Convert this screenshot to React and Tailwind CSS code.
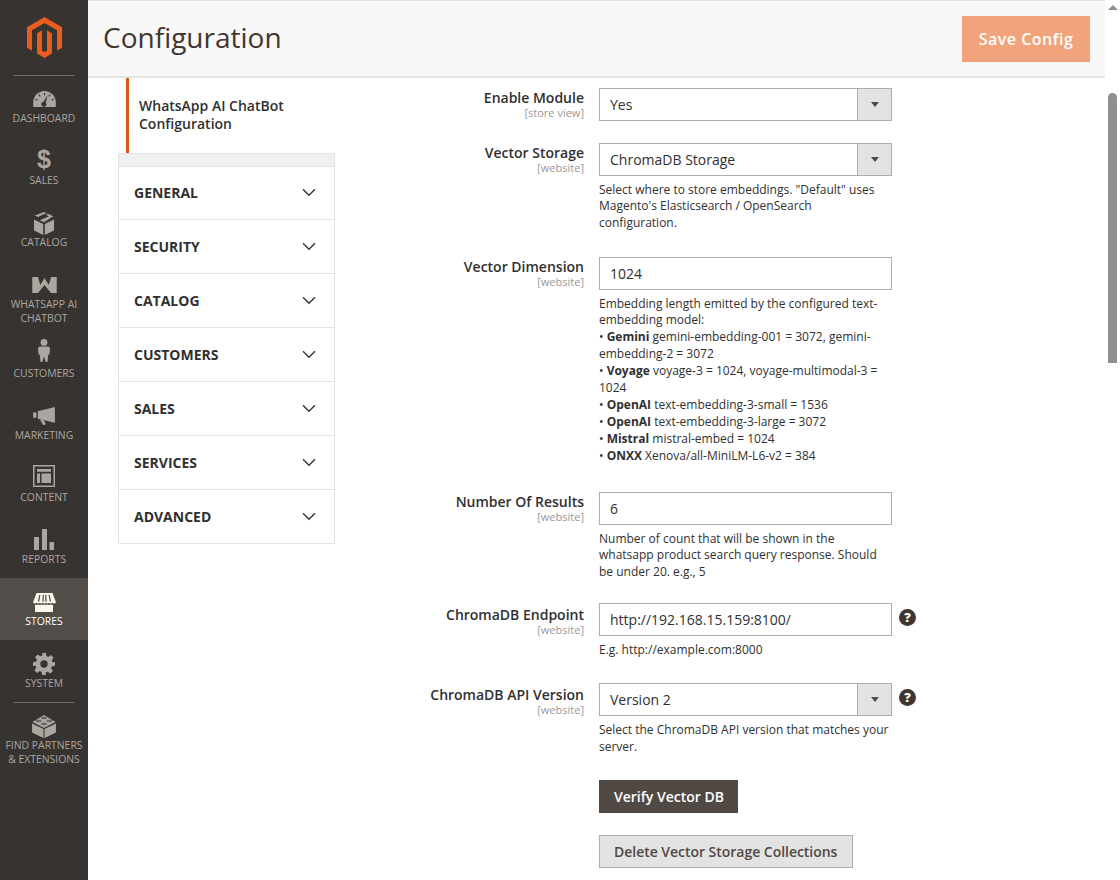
const C = "#aaa6a0";
const Gauge = ({ c = C }) => (
  <svg width="23" height="16" viewBox="0 0 24 17" fill={c}>
    <path d="M12 0C5.400 0 0 5.400 0 12v5h24v-5C24 5.400 18.600 0 12 0z" />
    <path d="M15.200 4.500l-4.200 7a2.600 2.600 0 1 0 2.400 1z" fill="#373330" />
    <g fill="#373330"><rect x="11.400" y="2" width="1.200" height="2.400" /><rect x="6.200" y="3.600" width="1.200" height="2.400" transform="rotate(-32 6.800 4.800)" /><rect x="2.800" y="8" width="1.200" height="2.400" transform="rotate(-62 3.400 9.200)" /><rect x="20" y="8" width="1.200" height="2.400" transform="rotate(62 20.600 9.200)" /><rect x="16.600" y="3.600" width="1.200" height="2.400" transform="rotate(32 17.200 4.800)" /></g>
  </svg>
);
const Dollar = () => (
  <span className="text-[25px] leading-none font-extrabold text-[#aaa6a0] [font-family:'Liberation_Sans',sans-serif]">$</span>
);
const Box = () => (
  <svg width="20" height="23" viewBox="0 0 20 23" fill={C}>
    <path d="M0 7.500L9.200 12v11L1 19a2 2 0 0 1-1-1.800z" />
    <path d="M20 7.500L10.800 12v11l8.200-4a2 2 0 0 0 1-1.800z" />
    <path d="M10 0l2.500 1.100L4 5l-3.300-1.500zM14 1.800l5.300 2.500L10 10.300 5.800 8.300 15 4.300 11.800 2.800z" />
  </svg>
);
const WLogo = () => (
  <svg width="25" height="16" viewBox="0 0 26 17" fill={C}>
    <path d="M0 0h6l2.500 8.500L13 1l4.500 7.500L20 0h6v17h-6L13 8.500 6 17H0z" />
  </svg>
);
const Person = () => (
  <svg width="12" height="23" viewBox="0 0 12 23" fill={C}>
    <circle cx="6" cy="3.400" r="3.400" />
    <path d="M2.500 7.500h7A2.300 2.300 0 0 1 12 9.800l-.5 5.700h-1.300L9.500 23H7.600L6 17.500 4.400 23H2.500l-.7-7.500H.5L0 9.800a2.300 2.300 0 0 1 2.500-2.300z" />
  </svg>
);
const Mega = () => (
  <svg width="22" height="18" viewBox="0 0 23 19" fill={C}>
    <rect x="0" y="5.500" width="3.500" height="6" rx="1.500" />
    <path d="M5 4.500L23 0v16.500L5 12.500z" />
    <path d="M7 13l4.500 1 2 4.500-3 .5z" />
  </svg>
);
const Content = () => (
  <svg width="22" height="22" viewBox="0 0 22 22" fill={C}>
    <path fillRule="evenodd" d="M0 0h22v22H0zM1.500 1.500v19h19v-19z" />
    <rect x="4" y="4" width="14" height="2.800" />
    <rect x="4" y="8.500" width="3" height="9.500" />
    <rect x="8.500" y="8.500" width="9.500" height="9.500" />
  </svg>
);
const Bars = () => (
  <svg width="20" height="21" viewBox="0 0 20 21" fill={C}>
    <rect x="0" y="8" width="5" height="13" />
    <rect x="8" y="0" width="5" height="21" />
    <rect x="15.500" y="13" width="4.500" height="8" />
  </svg>
);
const Store = () => (
  <svg width="23" height="19" viewBox="0 0 23 19" fill="#fbf7ec">
    <path d="M3.500 0h16L23 9.500q-1.800 1.800-3.500.2-1.700 1.600-3.300 0-1.600 1.600-3.300 0-1 1-1.400 1-.4 0-1.400-1-1.700 1.600-3.300 0-1.600 1.600-3.300 0Q1.800 11.300 0 9.500z" />
    <path d="M6.300 1.800L4.900 8.600h1.400l1.100-6.800zM9.800 1.800L9.300 8.600h1.400l.2-6.800zM12.100 1.800l.2 6.800h1.400l-.5-6.800zM15.600 1.800l1.100 6.800h1.400l-1.400-6.800z" fill="#524d49" />
    <path d="M2 11.500q1.500.8 3.200 0 1.600.8 3.200 0 1.600.8 3.100 0 1.600.8 3.100 0 1.600.8 3.200 0 1.200.8 2.200.3V19H2z" />
  </svg>
);
const Gear = () => (
  <svg width="22" height="22" viewBox="0 0 24 24" fill={C}>
    <path fillRule="evenodd" d="M10 0h4l.6 3.400 2.100.9 2.900-2 2.800 2.800-2 2.900.9 2.100L24 10v4l-3.400.6-.9 2.100 2 2.900-2.800 2.800-2.900-2-2.100.9L14 24h-4l-.6-3.400-2.100-.9-2.900 2-2.800-2.800 2-2.900-.9-2.100L0 14v-4l3.400-.6.9-2.100-2-2.900 2.800-2.800 2.900 2 2.100-.9zM12 8a4 4 0 1 0 0 8 4 4 0 0 0 0-8z" />
  </svg>
);
const Lego = () => (
  <svg width="24" height="24" viewBox="0 0 24 24" fill={C}>
    <path d="M0 9.500L11.500 15v9L1 19a2 2 0 0 1-1-1.500z" />
    <path d="M24 9.500L12.500 15v9L23 19a2 2 0 0 0 1-1.500z" />
    <path d="M12 1l11.500 7L12 14 .5 8z" />
    <g fill="#373330" fillOpacity=".55"><ellipse cx="12" cy="4" rx="3" ry="1.300" /><ellipse cx="6.500" cy="7" rx="3" ry="1.300" /><ellipse cx="17.500" cy="7" rx="3" ry="1.300" /><ellipse cx="12" cy="10" rx="3" ry="1.300" /></g>
  </svg>
);

function NavItem({ icon, label, active, tall }) {
  return (
    <div className={`flex flex-col items-center ${tall ? "h-[69px]" : "h-[62px]"} ${active ? "bg-[#524d49]" : ""}`}>
      <div className="h-[36px] pt-[12px] flex items-center justify-center">{icon}</div>
      <div className={`text-[10.4px] leading-[14px] text-center uppercase whitespace-pre-line ${active ? "text-white" : "text-[#aaa6a0]"}`}>{label}</div>
    </div>
  );
}

function Sidebar() {
  return (
    <div className="w-[88px] shrink-0 h-[880px] bg-[#373330]">
      <div className="h-[75px] flex items-center justify-center pb-[1px]">
        <svg width="35" height="41" viewBox="0 0 24 28" fill="#eb5d1f">
          <path d="M12 0L0 7v14l3.400 2V9l8.600-5 8.600 5v14l3.400-2V7z" />
          <path d="M13.700 23l-1.700 1-1.700-1V9L6.900 11v14l5.100 3 5.100-3V11l-3.400-2z" />
        </svg>
      </div>
      <div className="mx-[14px] border-t border-[#736e6a]" />
      <div className="-mt-px">
        <NavItem icon={<Gauge />} label="Dashboard" />
        <NavItem icon={<div className="-mt-[1px]"><Dollar /></div>} label="Sales" />
        <NavItem icon={<Box />} label="Catalog" />
        <NavItem tall icon={<div className="-mt-[1px]"><WLogo /></div>} label={"WhatsApp AI\nChatBot"} />
        <NavItem icon={<div className="-mt-[8px]"><Person /></div>} label="Customers" />
        <NavItem icon={<Mega />} label="Marketing" />
        <NavItem icon={<div className="-mt-[4px]"><Content /></div>} label="Content" />
        <NavItem icon={<div className="-mt-[1px]"><Bars /></div>} label="Reports" />
        <NavItem active icon={<Store />} label="Stores" />
        <NavItem icon={<Gear />} label="System" />
      </div>
      <div className="mx-[14px] border-t border-[#736e6a]" />
      <div className="mt-[1px]">
        <NavItem icon={<div className="-mt-[3px]"><Lego /></div>} label={"Find Partners\n& Extensions"} />
      </div>
    </div>
  );
}

const Chevron = () => (
  <svg width="14" height="9" viewBox="0 0 14 9" fill="none" stroke="#41362f" strokeWidth="1.500">
    <path d="M1 1.200l6 6 6-6" />
  </svg>
);

function Accordion({ label }) {
  return (
    <div className="h-[53.86px] flex items-center justify-between border-b border-[#e3e3e3] pl-[15px] pr-[18px]">
      <span className="text-[14px] font-bold text-[#303030]">{label}</span>
      <Chevron />
    </div>
  );
}

function LeftNav() {
  return (
    <div className="w-[217px] shrink-0 ml-[30px]">
      <div className="ml-[8px] h-[75px] border-l-[3px] border-[#d85a17] pl-[10px] pb-[2px] flex items-center">
        <div className="text-[14px] leading-[18px] font-semibold text-[#303030]">WhatsApp AI ChatBot<br />Configuration</div>
      </div>
      <div className="h-[13.500px] bg-[#f0f0f0] border border-[#e3e3e3]" />
      <div className="border-x border-[#e3e3e3]">
        {["GENERAL", "SECURITY", "CATALOG", "CUSTOMERS", "SALES", "SERVICES", "ADVANCED"].map((l) => (
          <Accordion key={l} label={l} />
        ))}
      </div>
    </div>
  );
}

function Row({ label, scope, children, help, className = "" }) {
  return (
    <div className={`flex ${className}`}>
      <div className={`w-[249px] shrink-0 text-right ${help ? "pt-[2px]" : ""}`}>
        <div className="text-[14px] leading-[20px] font-semibold text-[#303030]">{label}</div>
        <div className="text-[11px] leading-[10px] text-[#999]">[{scope}]</div>
      </div>
      <div className="w-[293px] shrink-0 ml-[15px]">{children}</div>
      {help && (
        <div className="ml-[7px] mt-[6px] w-[17px] h-[17px] rounded-full bg-[#41362f] text-white text-[13px] font-extrabold leading-[17px] text-center">?</div>
      )}
    </div>
  );
}

const Select = ({ value }) => (
  <div className="h-[33px] flex border border-[#adadad] bg-white">
    <div className="flex-1 pl-[10px] text-[14px] leading-[31px] text-[#303030]">{value}</div>
    <div className="w-[34px] border-l border-[#adadad] bg-[#e3e3e3] flex items-center justify-center">
      <div className="w-0 h-0 border-x-[4.500px] border-x-transparent border-t-[5px] border-t-[#514943]" />
    </div>
  </div>
);
const Input = ({ value }) => (
  <div className="h-[33px] border border-[#adadad] bg-white pl-[10px] text-[14px] leading-[31px] text-[#303030]">{value}</div>
);
const Note = ({ children }) => (
  <div className="mt-[5.500px] text-[12px] leading-[16.900px] text-[#303030]">{children}</div>
);

function Form() {
  return (
    <div className="pt-[10px]">
      <Row label="Enable Module" scope="store view"><Select value="Yes" /></Row>
      <Row label="Vector Storage" scope="website" className="mt-[22px]">
        <Select value="ChromaDB Storage" />
        <Note>Select where to store embeddings. "Default" uses Magento's Elasticsearch / OpenSearch configuration.</Note>
      </Row>
      <Row label="Vector Dimension" scope="website" className="mt-[24.800px]">
        <Input value="1024" />
        <Note>
          Embedding length emitted by the configured text-embedding model:<br />
          • <b>Gemini</b> gemini-embedding-001 = 3072, gemini-embedding-2 = 3072<br />
          • <b>Voyage</b> voyage-3 = 1024, voyage-multimodal-3 = 1024<br />
          • <b>OpenAI</b> text-embedding-3-small = 1536<br />
          • <b>OpenAI</b> text-embedding-3-large = 3072<br />
          • <b>Mistral</b> mistral-embed = 1024<br />
          • <b>ONXX</b> Xenova/all-MiniLM-L6-v2 = 384
        </Note>
      </Row>
      <Row label="Number Of Results" scope="website" className="mt-[27.500px]">
        <Input value="6" />
        <Note>Number of count that will be shown in the whatsapp product search query response. Should be under 20. e.g., 5</Note>
      </Row>
      <Row label="ChromaDB Endpoint" scope="website" help className="mt-[21.800px]">
        <Input value="http://192.168.15.159:8100/" />
        <Note>E.g. http://example.com:8000</Note>
      </Row>
      <Row label="ChromaDB API Version" scope="website" help className="mt-[24.600px]">
        <Select value="Version 2" />
        <Note>Select the ChromaDB API version that matches your server.</Note>
      </Row>
      <div className="ml-[264px] mt-[24.700px] flex flex-col items-start gap-[22px]">
        <div className="h-[33px] w-[139px] pl-[15px] bg-[#514943] text-white text-[14px] font-semibold leading-[33px] whitespace-nowrap">Verify Vector DB</div>
        <div className="h-[33px] w-[254px] pl-[14px] bg-[#e3e3e3] border border-[#adadad] text-[#514943] text-[14px] tracking-[-0.03px] font-semibold leading-[31px] whitespace-nowrap">Delete Vector Storage Collections</div>
      </div>
    </div>
  );
}

export default function App() {
  return (
    <div className="flex h-[880px] w-[1120px] overflow-hidden bg-white [font-family:'Open_Sans',sans-serif]">
      <Sidebar />
      <div className="flex-1 min-w-0">
        <div className="h-[78px] bg-[#f8f8f8] border-t border-b-2 border-[#e3e3e3] flex items-center justify-between px-[15px]">
          <div className="text-[28px] leading-[38px] mb-[3px] text-[#41362f]">Configuration</div>
          <div className="w-[128px] h-[46px] bg-[#f1a47c] text-white text-[16px] font-semibold tracking-[0.5px] flex items-center justify-center">Save Config</div>
        </div>
        <div className="flex">
          <LeftNav />
          <Form />
        </div>
      </div>
      <div className="w-[15px] shrink-0 flex flex-col items-center pt-[5px]">
        <div className="w-0 h-0 border-x-[5px] border-x-transparent border-b-[5px] border-b-[#8f8f8f]" />
        <div className="mt-[83px] w-[9px] h-[270px] rounded-t-full bg-[#8f8f8f]" />
      </div>
    </div>
  );
}
